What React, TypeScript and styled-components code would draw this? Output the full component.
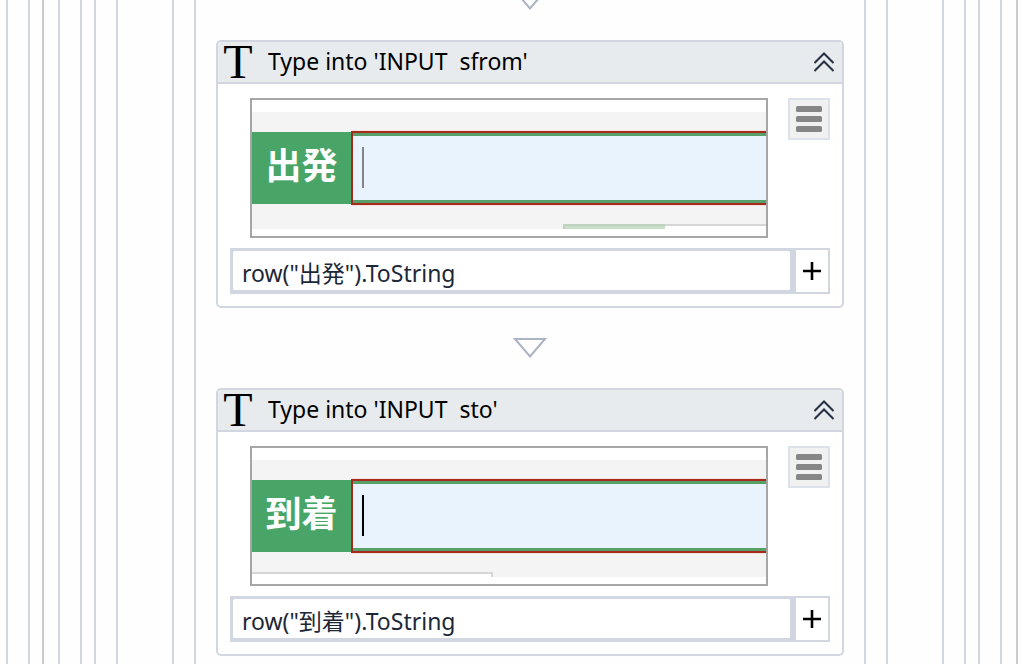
import React from "react";
import styled, { createGlobalStyle } from "styled-components";

const line = "#d1d6e1";

const GlobalStyle = createGlobalStyle`
  * { box-sizing: border-box; }
  body {
    margin: 0;
    background: #fefefe;
    font-family: "Noto Sans", "Noto Sans CJK JP", sans-serif;
    overflow: hidden;
  }
`;

const Canvas = styled.div`
  height: 100vh;
  overflow: hidden;
  padding-left: 6px;
`;

const Scope = styled.div<{ $inset: number; $end?: number; $open?: boolean; $tone?: string }>`
  min-height: 100vh;
  border: 0 solid ${(p) => p.$tone ?? line};
  border-left-width: 2px;
  border-right-width: ${(p) => (p.$open ? 0 : 2)}px;
  padding: 0 ${(p) => p.$end ?? p.$inset}px 0 ${(p) => p.$inset}px;
`;

const Connector = styled.div<{ $first?: boolean }>`
  display: flex;
  justify-content: center;
  align-items: flex-end;
  height: ${(p) => (p.$first ? 40 : 80)}px;
  padding-bottom: 28px;
  overflow: hidden;

  svg {
    display: block;
    flex: none;
  }
`;

const Card = styled.section`
  border: 2px solid ${line};
  border-radius: 5px;
  background: #fff;
`;

const CardHeader = styled.header`
  display: flex;
  align-items: center;
  height: 42px;
  padding: 0 6px 0 5px;
  border-bottom: 2px solid ${line};
  border-radius: 3px 3px 0 0;
  background: #e7ebee;
`;

const TypeIcon = styled.span`
  width: 30px;
  font: 48px/42px "Liberation Serif", serif;
  text-align: center;
  color: #000;
`;

const Title = styled.h2`
  flex: 1;
  margin: 0 0 0 15px;
  font-size: 23px;
  font-weight: 400;
  line-height: 36px;
  padding-bottom: 2px;
  white-space: pre;
  color: #000;
`;

const IconButton = styled.button`
  display: flex;
  padding: 0;
  border: 0;
  background: none;
`;

const CardBody = styled.div`
  display: flex;
  flex-direction: column;
  gap: 10px;
  padding: 14px 12px 12px;
`;

const PreviewRow = styled.div`
  display: flex;
  align-items: flex-start;
  gap: 20px;
  padding-left: 20px;
`;

const Preview = styled.figure`
  flex: 1;
  min-width: 0;
  height: 140px;
  margin: 0;
  padding: 12px 0 7px;
  border: 2px solid #a6a6a6;
  background: #fff;
`;

const Snapshot = styled.div`
  display: flex;
  flex-direction: column;
  justify-content: space-between;
  height: 117px;
  padding-top: 19px;
  background: #f4f4f4;
`;

const FieldStrip = styled.div`
  display: flex;
  align-items: center;
`;

const FieldLabel = styled.div`
  width: 99px;
  height: 72px;
  background: #48a567;
  color: #fff;
  font: 700 36px/62px "Noto Sans CJK JP", sans-serif;
  text-align: center;
`;

const FieldBox = styled.div`
  flex: 1;
  height: 74px;
  border: 2px solid #a52a1c;
  border-right: 0;
  box-shadow: 0 0 0 1px #f8e0de;
  clip-path: inset(-1px 0 -1px 0);
`;

const FieldInner = styled.div`
  height: 70px;
  padding: 11px 9px;
  border: 3px solid #57a06a;
  border-width: 3px 0;
  background: #e8f3fd;
`;

const Caret = styled.div<{ $color: string }>`
  width: 2px;
  height: 41px;
  background: ${(p) => p.$color};
`;

const Remnant = styled.div`
  display: flex;
  height: 5px;
`;

const GreenTab = styled.div`
  width: 102px;
  margin-left: auto;
  border: 2px solid #bfd2bf;
  border-width: 2px 0 0 2px;
  background: #c9dfc8;
`;

const PanelEdge = styled.div<{ $width: number; $closed?: boolean }>`
  width: ${(p) => p.$width}px;
  border: 2px solid #d6d6d6;
  border-width: 2px ${(p) => (p.$closed ? 2 : 0)}px 0 0;
  background: #fff;
`;

const MenuButton = styled.button`
  display: flex;
  align-items: center;
  justify-content: center;
  width: 42px;
  height: 42px;
  padding: 0;
  border: 2px solid #dde1e9;
  background: #f1f1f1;
`;

const ExpressionRow = styled.div`
  display: flex;
  height: 46px;
  border: 2px solid ${line};
  background: ${line};
`;

const ExpressionInput = styled.input`
  flex: 1;
  min-width: 0;
  padding: 4px 8px 0 9px;
  border: 1px solid ${line};
  border-width: 1px 2px 2px 1px;
  border-radius: 3px;
  outline: 0;
  background: #fff;
  color: #1c2738;
  font: 23px/30px "Noto Sans", "Noto Sans CJK JP", sans-serif;
`;

const AddButton = styled.button`
  display: flex;
  align-items: center;
  justify-content: center;
  width: 36px;
  padding: 0;
  border: 0 solid ${line};
  border-left-width: 4px;
  background: #fff;
`;

const Arrow = () => (
  <svg width="34" height="22" viewBox="0 0 34 22" fill="none" aria-hidden="true">
    <path d="M2 1H32L17 18.5Z" stroke="#abb3c4" strokeWidth="2" />
  </svg>
);

type ActivityProps = {
  name: string;
  label: string;
  caret: string;
  remnant: React.ReactNode;
};

const Activity = ({ name, label, caret, remnant }: ActivityProps) => (
  <Card>
    <CardHeader>
      <TypeIcon aria-hidden="true">T</TypeIcon>
      <Title>{`Type into 'INPUT  ${name}'`}</Title>
      <IconButton type="button" aria-label="Collapse">
        <svg width="24" height="24" viewBox="0 0 24 24" fill="none" stroke="#253041" strokeWidth="2">
          <path d="M2.5 13L12 3.5L21.5 13M2.5 21L12 11.5L21.5 21" />
        </svg>
      </IconButton>
    </CardHeader>
    <CardBody>
      <PreviewRow>
        <Preview>
          <Snapshot>
            <FieldStrip>
              <FieldLabel>{label}</FieldLabel>
              <FieldBox>
                <FieldInner>
                  <Caret $color={caret} />
                </FieldInner>
              </FieldBox>
            </FieldStrip>
            <Remnant>{remnant}</Remnant>
          </Snapshot>
        </Preview>
        <MenuButton type="button" aria-label="Options">
          <svg width="26" height="26" viewBox="0 0 26 26" fill="#868686">
            <rect width="26" height="6" rx="1.5" />
            <rect y="10" width="26" height="6" rx="1.5" />
            <rect y="20" width="26" height="6" rx="1.5" />
          </svg>
        </MenuButton>
      </PreviewRow>
      <ExpressionRow>
        <ExpressionInput
          type="text"
          aria-label={`Text for ${name}`}
          defaultValue={`row("${label}").ToString`}
          spellCheck={false}
        />
        <AddButton type="button" aria-label="Add">
          <svg width="18" height="18" viewBox="0 0 18 18" stroke="#000" strokeWidth="2.6">
            <path d="M9 0V18M0 9H18" />
          </svg>
        </AddButton>
      </ExpressionRow>
    </CardBody>
  </Card>
);

export default function App() {
  return (
    <>
      <GlobalStyle />
      <Canvas>
        <Scope $inset={20} $end={0} $open>
          <Scope $inset={12} $end={4} $open>
            <Scope $inset={14} $tone="#cbcbcb">
              <Scope $inset={20}>
                <Scope $inset={12}>
                  <Scope $inset={20}>
                    <Scope $inset={54}>
                      <Scope $inset={20}>
                        <Scope as="main" $inset={20}>
                          <Connector $first>
                            <Arrow />
                          </Connector>
                          <Activity
                            name="sfrom"
                            label="出発"
                            caret="#858585"
                            remnant={
                              <>
                                <GreenTab />
                                <PanelEdge $width={101} />
                              </>
                            }
                          />
                          <Connector>
                            <Arrow />
                          </Connector>
                          <Activity
                            name="sto"
                            label="到着"
                            caret="#000"
                            remnant={<PanelEdge $width={241} $closed />}
                          />
                        </Scope>
                      </Scope>
                    </Scope>
                  </Scope>
                </Scope>
              </Scope>
            </Scope>
          </Scope>
        </Scope>
      </Canvas>
    </>
  );
}
